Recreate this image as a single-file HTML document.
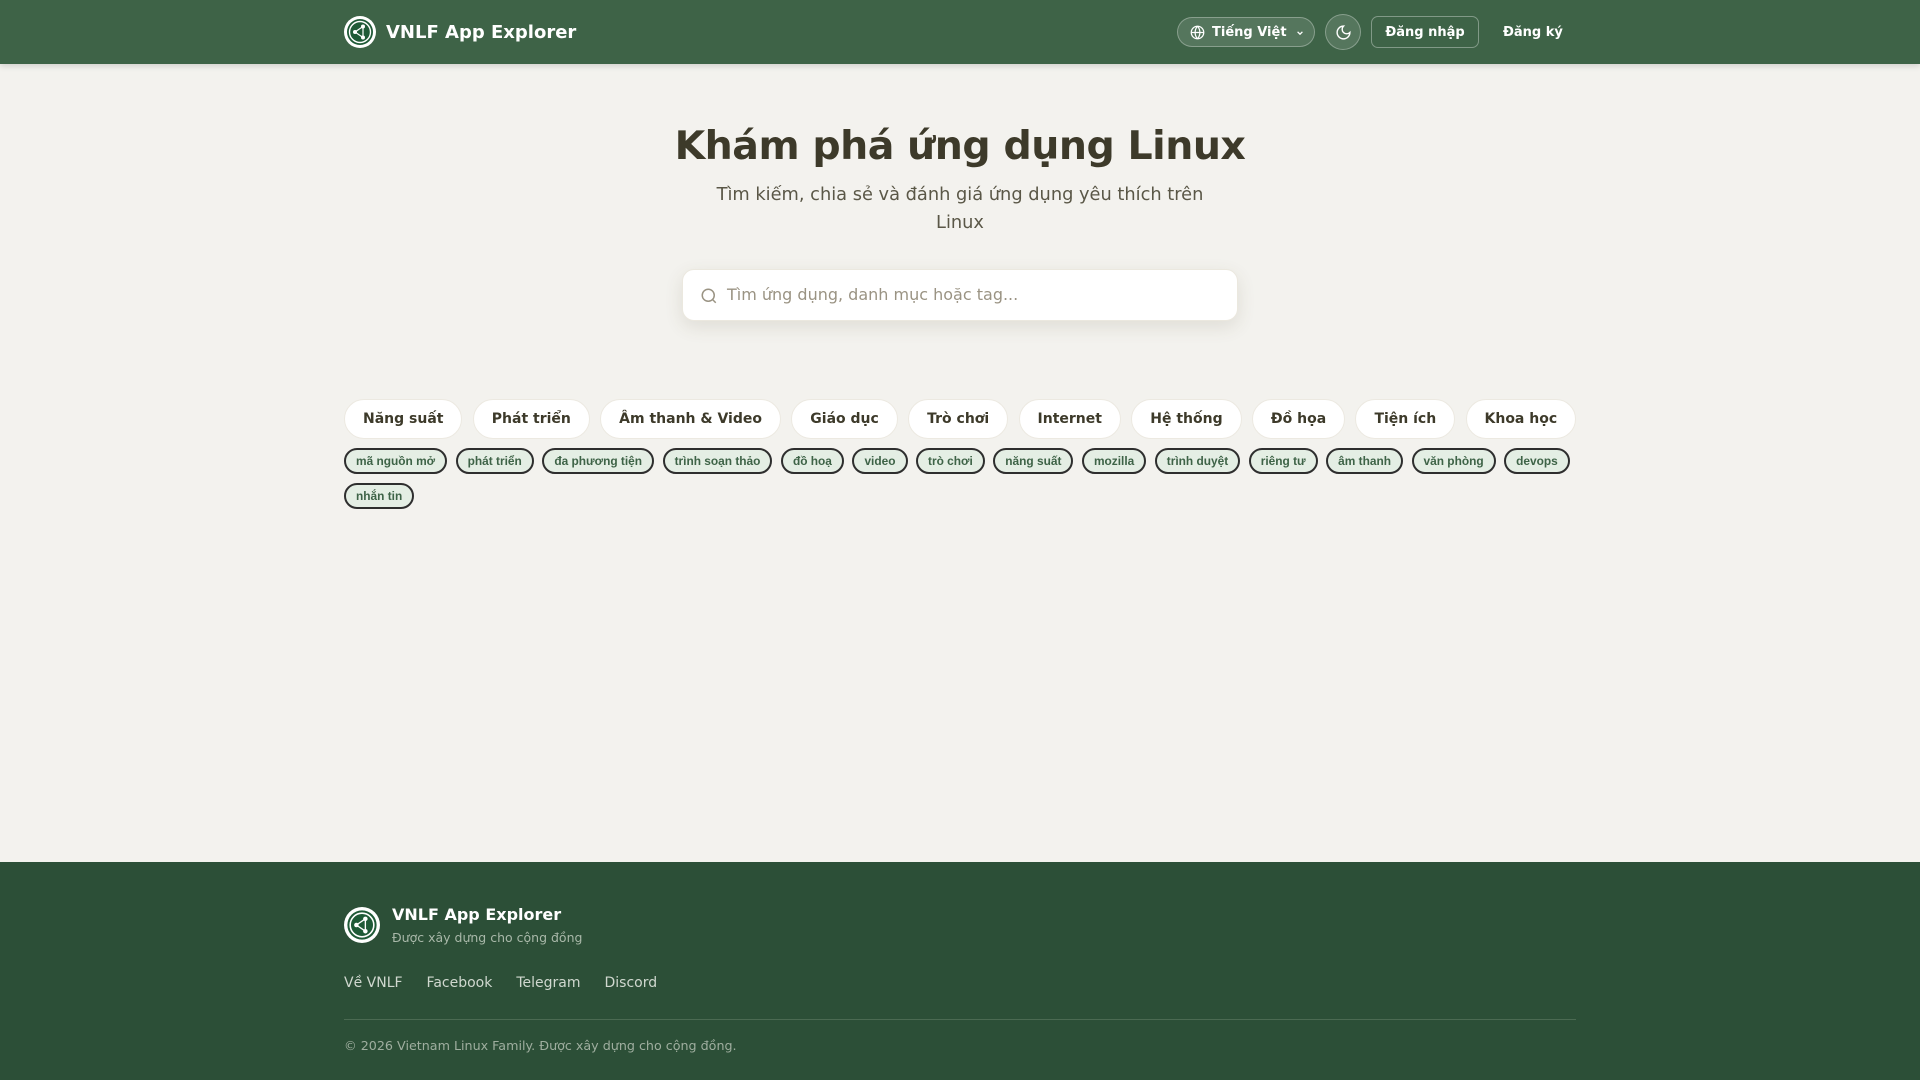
<!DOCTYPE html>
<html><head><meta charset="utf-8"><style>
*{box-sizing:border-box;margin:0;padding:0}
body{width:1920px;height:1080px;background:#f3f2ee;font-family:"DejaVu Sans","Liberation Sans",sans-serif;position:relative;overflow:hidden;color:#3d3a2a}
.hdr{position:absolute;left:0;top:0;width:1920px;height:64px;background:#3e6347;box-shadow:0 2px 6px rgba(0,0,0,.15)}
.logo{position:absolute;width:32px;height:32px;border-radius:50%;background:#fff}
.brand{position:absolute;left:386px;top:22px;color:#fff;font-weight:bold;font-size:18px}
.lang{position:absolute;left:1177px;top:17px;width:138px;height:30px;border:1px solid rgba(255,255,255,.3);background:rgba(255,255,255,.12);border-radius:15px;color:#fff;font-size:13px;font-weight:bold;line-height:30px;padding-left:34px}
.moon{position:absolute;left:1325px;top:14px;width:36px;height:36px;border-radius:50%;border:1px solid rgba(255,255,255,.3);background:rgba(255,255,255,.12)}
.login{position:absolute;left:1371px;top:16px;width:108px;height:32px;border:1px solid rgba(255,255,255,.35);border-radius:7px;color:#fff;font-size:13px;font-weight:bold;text-align:center;line-height:32px}
.reg{position:absolute;left:1503px;top:18px;color:#fff;font-size:13px;font-weight:bold;line-height:30px}
h1{position:absolute;left:0;width:1920px;top:123px;text-align:center;font-size:39.5px;font-weight:bold;letter-spacing:-.5px;color:#3d3a2a}
.sub{position:absolute;left:0;width:1920px;top:181px;text-align:center;font-size:17.8px;line-height:28px;color:#5a5747}
.search{position:absolute;left:682px;top:269px;width:556px;height:52px;background:#fff;border-radius:12px;border:1px solid #ebe8df;box-shadow:0 6px 18px rgba(80,70,40,.12);font-size:16px;color:#9a9383;line-height:50px;padding-left:44px}
.cats{position:absolute;left:344px;top:399px;display:flex;gap:10.3px}
.cat{height:40px;background:#fff;border:1px solid #ece9e1;border-radius:20px;padding:0 18px;font-size:14px;font-weight:bold;line-height:38px;color:#3d3a2a}
.tags{position:absolute;left:344px;top:448px;width:1240px;display:flex;flex-wrap:wrap;gap:9px 8.5px}
.tag{height:26px;border:2px solid #2e2e2e;border-radius:13px;background:#e4eee4;color:#3e6347;font-family:"Liberation Sans",sans-serif;font-weight:bold;font-size:11.9px;line-height:22px;padding:0 10px}
.ftr{position:absolute;left:0;top:862px;width:1920px;height:218px;background:#2c4f37}
.ft1{position:absolute;left:392px;top:905px;color:#fff;font-weight:bold;font-size:16px}
.ft2{position:absolute;left:392px;top:930px;color:#a9b8a9;font-size:12.5px}
.links{position:absolute;left:344px;top:975px;color:#d0d8cf;font-size:14px;display:flex;gap:24px}
.hr{position:absolute;left:344px;top:1019px;width:1232px;height:1px;background:#4b6a52}
.copy{position:absolute;left:344px;top:1038px;color:#9fae9f;font-size:12.7px}
</style></head><body>
<div class="hdr">
 <div class="logo" style="left:344px;top:16px"><svg width="32" height="32" viewBox="0 0 32 32"><circle cx="16" cy="16" r="13" fill="#1f5a37"/><circle cx="16" cy="16" r="10.5" fill="none" stroke="#fff" stroke-width="1.4"/><path d="M11 16 L19 10.5 L19 21.5 Z" fill="none" stroke="#fff" stroke-width="1.2"/><circle cx="11" cy="16" r="2" fill="#fff"/><circle cx="19" cy="10.5" r="2" fill="#fff"/><circle cx="19" cy="21.5" r="2" fill="#fff"/></svg></div>
 <div class="brand">VNLF App Explorer</div>
 <div class="lang"><svg style="position:absolute;left:12px;top:7px" width="15" height="15" viewBox="0 0 24 24" fill="none" stroke="#fff" stroke-width="2"><circle cx="12" cy="12" r="10"/><path d="M2 12h20M12 2a15 15 0 0 1 0 20M12 2a15 15 0 0 0 0 20"/></svg>Tiếng Việt<svg style="position:absolute;right:10px;top:11px" width="8" height="8" viewBox="0 0 10 10" fill="none" stroke="#fff" stroke-width="1.6"><path d="M2 3.5l3 3 3-3"/></svg></div>
 <div class="moon"><svg style="position:absolute;left:9px;top:9px" width="17" height="17" viewBox="0 0 24 24" fill="none" stroke="#fff" stroke-width="2"><path d="M12 3a6 6 0 0 0 9 9 9 9 0 1 1-9-9z"/></svg></div>
 <div class="login">Đăng nhập</div>
 <div class="reg">Đăng ký</div>
</div>
<h1>Khám phá ứng dụng Linux</h1>
<div class="sub">Tìm kiếm, chia sẻ và đánh giá ứng dụng yêu thích trên<br>Linux</div>
<div class="search"><svg style="position:absolute;left:17px;top:17px" width="18" height="18" viewBox="0 0 24 24" fill="none" stroke="#9a9383" stroke-width="2"><circle cx="11" cy="11" r="8"/><path d="M21 21l-4.3-4.3"/></svg>Tìm ứng dụng, danh mục hoặc tag...</div>
<div class="cats"><div class="cat">Năng suất</div><div class="cat">Phát triển</div><div class="cat">Âm thanh &amp; Video</div><div class="cat">Giáo dục</div><div class="cat">Trò chơi</div><div class="cat">Internet</div><div class="cat">Hệ thống</div><div class="cat">Đồ họa</div><div class="cat">Tiện ích</div><div class="cat">Khoa học</div></div>
<div class="tags"><div class="tag">mã nguồn mở</div><div class="tag">phát triển</div><div class="tag">đa phương tiện</div><div class="tag">trình soạn thảo</div><div class="tag">đồ hoạ</div><div class="tag">video</div><div class="tag">trò chơi</div><div class="tag">năng suất</div><div class="tag">mozilla</div><div class="tag">trình duyệt</div><div class="tag">riêng tư</div><div class="tag">âm thanh</div><div class="tag">văn phòng</div><div class="tag">devops</div><div class="tag">nhắn tin</div></div>
<div class="ftr"></div>
<div class="logo" style="left:344px;top:907px;width:36px;height:36px"><svg width="36" height="36" viewBox="0 0 32 32"><circle cx="16" cy="16" r="13" fill="#1f5a37"/><circle cx="16" cy="16" r="10.5" fill="none" stroke="#fff" stroke-width="1.4"/><path d="M11 16 L19 10.5 L19 21.5 Z" fill="none" stroke="#fff" stroke-width="1.2"/><circle cx="11" cy="16" r="2" fill="#fff"/><circle cx="19" cy="10.5" r="2" fill="#fff"/><circle cx="19" cy="21.5" r="2" fill="#fff"/></svg></div>
<div class="ft1">VNLF App Explorer</div>
<div class="ft2">Được xây dựng cho cộng đồng</div>
<div class="links"><span>Về VNLF</span><span>Facebook</span><span>Telegram</span><span>Discord</span></div>
<div class="hr"></div>
<div class="copy">© 2026 Vietnam Linux Family. Được xây dựng cho cộng đồng.</div>
</body></html>
